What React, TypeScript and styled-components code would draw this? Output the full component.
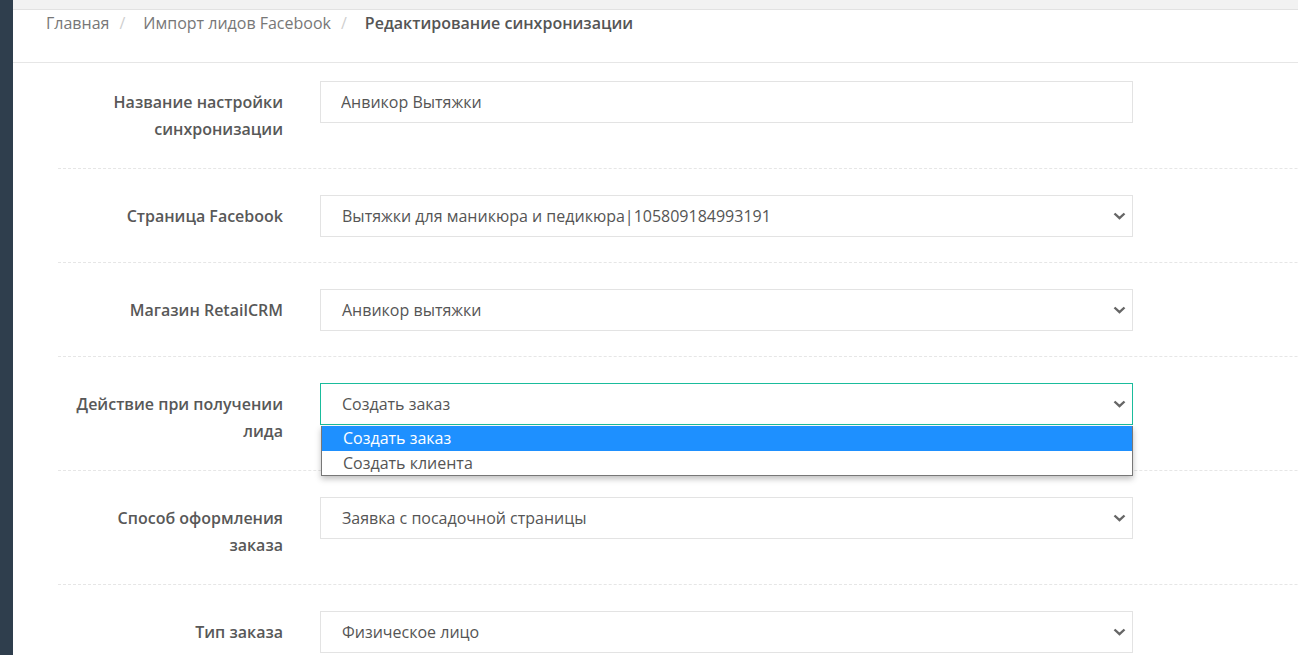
import React from "react";
import styled, { createGlobalStyle } from "styled-components";

const GlobalStyle = createGlobalStyle`
  html, body { margin: 0; padding: 0; background: #fff; }
  body { font-family: "Open Sans", "Noto Sans", sans-serif; overflow: hidden; }
  * { box-sizing: border-box; }
`;

const Shell = styled.div`
  display: flex;
  height: 655px;
  width: 1298px;
  overflow: hidden;
`;

const Sidebar = styled.aside`
  width: 13px;
  flex: 0 0 13px;
  background: #2f3e4d;
`;

const Main = styled.main`
  flex: 1;
  display: flex;
  flex-direction: column;
  min-width: 0;
`;

const TopBar = styled.div`
  flex: 0 0 auto;
  height: 10px;
  background: #f2f2f2;
  border-bottom: 1px solid #e2e2e2;
`;

const Header = styled.nav`
  flex: 0 0 auto;
  height: 53px;
  border-bottom: 1px solid #e6e6e6;
  display: flex;
  align-items: flex-start;
  padding: 1px 0 0 33px;
  font-size: 16px;
  line-height: 24px;
`;

const Crumb = styled.span<{ $active?: boolean }>`
  color: ${(p) => (p.$active ? "#555" : "#777")};
  font-weight: ${(p) => (p.$active ? 600 : 400)};
`;

const CrumbSep = styled.span`
  color: #cfcfcf;
  margin: 0 18px 0 10px;
`;

const Form = styled.form`
  flex: 0 0 auto;
  padding: 18px 0 0 45px;
  display: flex;
  flex-direction: column;
`;

const Row = styled.div<{ $first?: boolean }>`
  display: grid;
  grid-template-columns: 225px 813px;
  column-gap: 37px;
  align-items: start;
  padding: ${(p) => (p.$first ? "0" : "26px")} 400px 25px 0;
  margin-right: -400px;
  border-bottom: 1px dashed #e6e6e6;
`;

const Label = styled.label`
  text-align: right;
  font-weight: 600;
  font-size: 16px;
  line-height: 27px;
  padding-top: 8px;
  color: #585858;
`;

const Field = styled.div`
  position: relative;
`;

const TextInput = styled.input`
  display: block;
  width: 100%;
  height: 42px;
  border: 1px solid #e3e3e3;
  padding: 0 20px;
  font-family: "Open Sans", "Noto Sans", sans-serif;
  font-size: 16px;
  color: #555;
  outline: none;
  background: #fff;
`;

const SelectBox = styled.div<{ $focused?: boolean }>`
  display: flex;
  align-items: center;
  justify-content: space-between;
  height: 42px;
  border: 1px solid ${(p) => (p.$focused ? "#1abc9c" : "#e3e3e3")};
  padding: 0 5px 0 21px;
  font-size: 16px;
  color: #555;
  background: #fff;
`;

const Chevron = styled.svg`
  width: 13px;
  height: 8px;
  margin-right: 1px;
  flex: 0 0 auto;
`;

const Dropdown = styled.ul`
  position: absolute;
  top: 43px;
  left: 1px;
  right: 0;
  margin: 0;
  padding: 0;
  list-style: none;
  background: #fff;
  border: 1px solid #777;
  border-top: none;
  box-shadow: 0 3px 6px rgba(0, 0, 0, 0.25);
  z-index: 5;
`;

const Option = styled.li<{ $selected?: boolean }>`
  height: 24.5px;
  line-height: 24px;
  padding-left: 21px;
  font-size: 16px;
  color: ${(p) => (p.$selected ? "#fff" : "#555")};
  background: ${(p) => (p.$selected ? "#1e90ff" : "#fff")};
`;

const ChevronIcon = () => (
  <Chevron viewBox="0 0 13 8">
    <polyline
      points="1.5,1.5 6.5,6.2 11.5,1.5"
      fill="none"
      stroke="#666"
      strokeWidth="2.4"
    />
  </Chevron>
);

type SelectProps = {
  value: string;
  focused?: boolean;
  options?: string[];
};

const Select = ({ value, focused, options }: SelectProps) => (
  <Field>
    <SelectBox $focused={focused} role="combobox" aria-expanded={!!options}>
      <span>{value}</span>
      <ChevronIcon />
    </SelectBox>
    {options && (
      <Dropdown role="listbox">
        {options.map((o) => (
          <Option key={o} $selected={o === value} role="option">
            {o}
          </Option>
        ))}
      </Dropdown>
    )}
  </Field>
);

export default function App() {
  return (
    <>
      <GlobalStyle />
      <Shell>
        <Sidebar />
        <Main>
          <TopBar />
          <Header>
            <Crumb>Главная</Crumb>
            <CrumbSep>/</CrumbSep>
            <Crumb>Импорт лидов Facebook</Crumb>
            <CrumbSep>/</CrumbSep>
            <Crumb $active>Редактирование синхронизации</Crumb>
          </Header>
          <Form>
            <Row $first>
              <Label>
                Название настройки
                <br />
                синхронизации
              </Label>
              <Field>
                <TextInput readOnly defaultValue="Анвикор Вытяжки" />
              </Field>
            </Row>
            <Row>
              <Label>Страница Facebook</Label>
              <Select value="Вытяжки для маникюра и педикюра|105809184993191" />
            </Row>
            <Row>
              <Label>Магазин RetailCRM</Label>
              <Select value="Анвикор вытяжки" />
            </Row>
            <Row>
              <Label>
                Действие при получении
                <br />
                лида
              </Label>
              <Select
                value="Создать заказ"
                focused
                options={["Создать заказ", "Создать клиента"]}
              />
            </Row>
            <Row>
              <Label>
                Способ оформления
                <br />
                заказа
              </Label>
              <Select value="Заявка с посадочной страницы" />
            </Row>
            <Row>
              <Label>Тип заказа</Label>
              <Select value="Физическое лицо" />
            </Row>
          </Form>
        </Main>
      </Shell>
    </>
  );
}
